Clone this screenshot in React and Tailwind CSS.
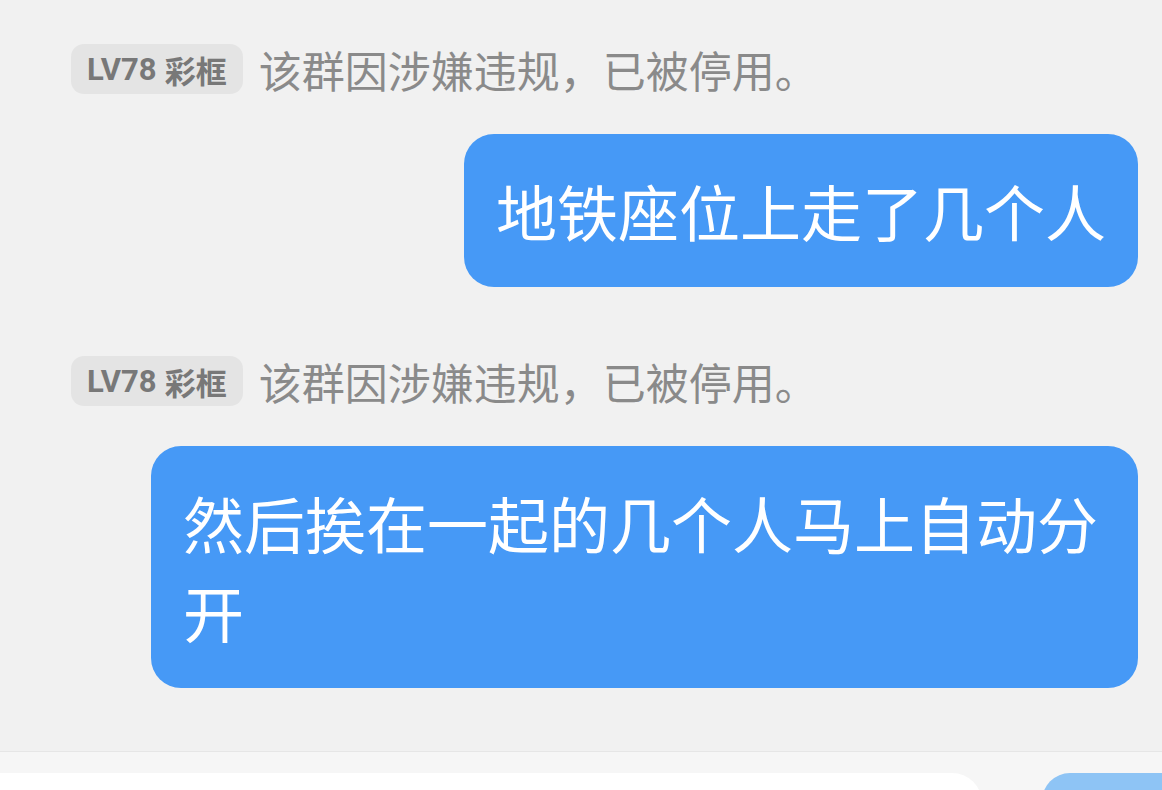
import React from 'react';

const font = { fontFamily: '"Noto Sans CJK SC", "Noto Sans", sans-serif' };

const SystemNotice = ({ level, text }) => (
  <div className="flex items-center pl-[71px] gap-[16px] h-[50px]">
    <span className="h-[50px] px-[16px] flex items-center rounded-[13px] bg-[#e4e4e4] text-[#787878] text-[31px] font-bold leading-none whitespace-nowrap">
      <span className="font-['Roboto']">{level}</span>
      <span className="ml-[8px]">彩框</span>
    </span>
    <span className="text-[43px] leading-none text-[#8a8a8a] whitespace-nowrap">{text}</span>
  </div>
);

const Bubble = ({ children }) => (
  <div className="flex justify-end pr-[24px]">
    <div className="max-w-[987px] bg-[#4699f6] text-white rounded-[30px] px-[32px] py-[32px] text-[61px] leading-[89px]">
      {children}
    </div>
  </div>
);

export default function App() {
  return (
    <div className="w-[1162px] h-[790px] bg-[#f1f1f1] flex flex-col overflow-hidden" style={font}>
      <div className="flex-1 flex flex-col pt-[44px]">
        <SystemNotice level="LV78" text="该群因涉嫌违规，已被停用。" />
        <div className="mt-[40px]">
          <Bubble>地铁座位上走了几个人</Bubble>
        </div>
        <div className="mt-[69px]">
          <SystemNotice level="LV78" text="该群因涉嫌违规，已被停用。" />
        </div>
        <div className="mt-[40px]">
          <Bubble>然后挨在一起的几个人马上自动分开</Bubble>
        </div>
      </div>
      <div className="h-[39px] shrink-0 border-t border-[#e6e6e6] bg-[#f6f6f6] flex items-start pt-[21px] gap-[60px]">
        <div className="flex-1 max-w-[984px] h-[60px] bg-white rounded-r-[30px]" />
        <div className="w-[120px] h-[60px] bg-[#8ec4f5] rounded-l-[28px] ml-auto" />
      </div>
    </div>
  );
}
